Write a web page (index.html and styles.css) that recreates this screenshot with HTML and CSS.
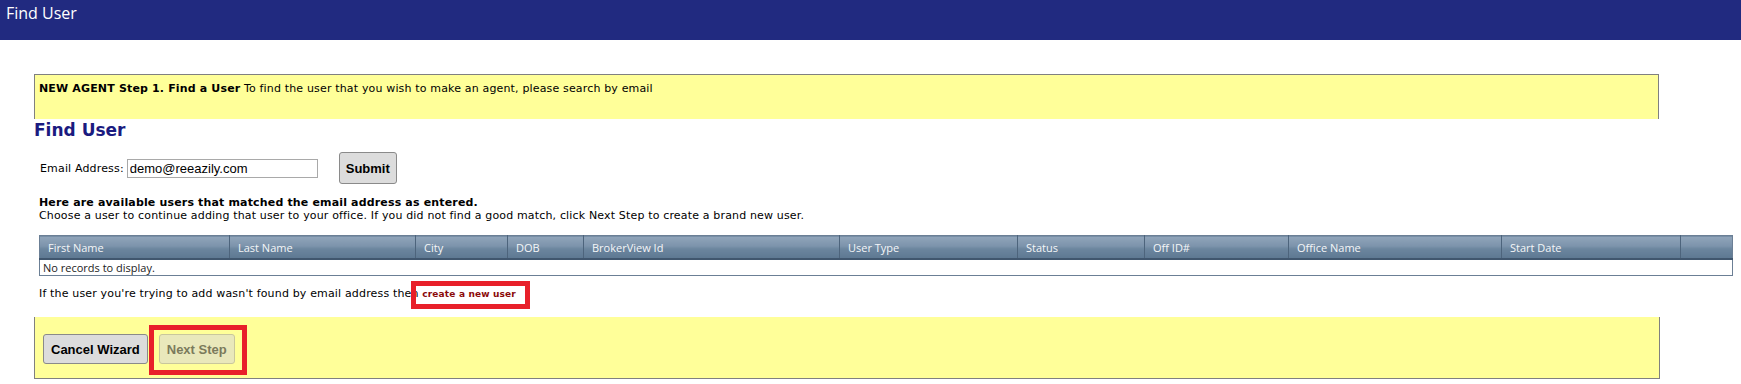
FILE: index.html
```html
<!DOCTYPE html>
<html lang="en">
<head>
    <meta charset="UTF-8">
    <title>Find User</title>
    <link rel="stylesheet" href="styles.css">
</head>
<body>
    <div class="topbar">Find User</div>

    <div class="page">
        <div class="step-note">
            <b>NEW AGENT Step 1. Find a User</b> To find the user that you wish to make an agent, please search by email
        </div>

        <h2 class="section-title">Find User</h2>

        <form class="search-row">
            <label for="email">Email Address:</label>
            <input type="text" id="email" value="demo@reeazily.com">
            <button type="button" class="btn btn-submit">Submit</button>
        </form>

        <div class="match-info">
            <b>Here are available users that matched the email address as entered.</b><br>
            Choose a user to continue adding that user to your office. If you did not find a good match, click Next Step to create a brand new user.
        </div>

        <table class="grid">
            <colgroup>
                <col style="width:190px">
                <col style="width:186px">
                <col style="width:92px">
                <col style="width:76px">
                <col style="width:256px">
                <col style="width:178px">
                <col style="width:127px">
                <col style="width:144px">
                <col style="width:213px">
                <col style="width:179px">
                <col>
            </colgroup>
            <thead>
                <tr>
                    <th>First Name</th>
                    <th>Last Name</th>
                    <th>City</th>
                    <th>DOB</th>
                    <th>BrokerView Id</th>
                    <th>User Type</th>
                    <th>Status</th>
                    <th>Off ID#</th>
                    <th>Office Name</th>
                    <th>Start Date</th>
                    <th></th>
                </tr>
            </thead>
            <tbody>
                <tr>
                    <td colspan="11">No records to display.</td>
                </tr>
            </tbody>
        </table>

        <p class="not-found">
            If the user you're trying to add wasn't found by email address then <a href="#" class="new-user-link">create a new user<span class="mark mark-link"></span></a>
        </p>

        <div class="wizard-bar">
            <button type="button" class="btn btn-wizard">Cancel Wizard</button>
            <span class="marked">
                <button type="button" class="btn btn-wizard" disabled>Next Step</button>
                <span class="mark mark-next"></span>
            </span>
        </div>
    </div>
</body>
</html>
```

FILE: styles.css
```css
body {
    margin: 0;
    font-family: "DejaVu Sans", Verdana, sans-serif;
    font-size: 11px;
    line-height: 13px;
    letter-spacing: 0.16px;
    color: #000;
    background-color: #fff;
}
.topbar {
    height: 40px;
    background-color: #212a80;
    color: #fff;
    font-family: "Open Sans", "Segoe UI", sans-serif;
    font-size: 16px;
    line-height: 26px;
    letter-spacing: 0;
    padding-left: 6px;
}
.page {
    padding: 34px 0 0 34px;
}
.step-note {
    width: 1625px;
    height: 45px;
    box-sizing: border-box;
    background-color: #ffff99;
    border: 1px solid #808080;
    border-bottom: none;
    padding: 7px 0 0 4px;
}
.section-title {
    margin: 0;
    font-size: 17px;
    line-height: 22px;
    font-weight: bold;
    letter-spacing: 0;
    color: #1b1b80;
}
.search-row {
    display: flex;
    align-items: center;
    height: 32px;
    margin: 11px 0 0 6px;
}
.search-row label {
    margin-right: 3px;
}
.search-row input {
    width: 191px;
    height: 19px;
    box-sizing: border-box;
    margin: 0;
    padding: 0 2px;
    border: 1px solid #a9a9a9;
    font-family: "Liberation Sans", Arial, sans-serif;
    font-size: 13px;
    letter-spacing: 0;
    color: #000;
}
.btn {
    font-family: "Liberation Sans", Arial, sans-serif;
    font-size: 13px;
    font-weight: bold;
    letter-spacing: 0;
    color: #000;
    background-color: #dcdcdc;
    border: 1px solid #8a8a8a;
    border-radius: 3px;
    padding: 0;
    cursor: pointer;
}
.btn:disabled {
    background-color: #e9e8bb;
    border-color: #c9c79c;
    color: #7b7a5c;
    cursor: default;
}
.btn-submit {
    width: 58px;
    height: 32px;
    margin-left: 21px;
}
.match-info {
    margin: 12px 0 0 5px;
}
.grid {
    margin: 13px 0 0 5px;
    width: 1694px;
    table-layout: fixed;
    border-collapse: collapse;
    border: 1px solid #6b7f95;
    font-family: "Open Sans", "Segoe UI", sans-serif;
    font-size: 11px;
    letter-spacing: 0;
}
.grid th {
    height: 22px;
    padding: 0 0 0 8px;
    text-align: left;
    font-weight: normal;
    color: #f4f6f8;
    background: linear-gradient(to bottom, #91a5ba 0%, #7c93ab 45%, #6c869f 55%, #5d7892 100%);
    border-left: 1px solid #4d647c;
    border-bottom: 2px solid #40566e;
    white-space: nowrap;
    overflow: hidden;
}
.grid th:first-child {
    border-left: none;
}
.grid td {
    height: 15px;
    padding: 0 0 0 3px;
    line-height: 15px;
    color: #222;
}
.not-found {
    position: relative;
    margin: 11px 0 0 5px;
}
.new-user-link {
    position: relative;
    color: #8b0a0a;
    font-weight: bold;
    font-size: 9px;
    text-decoration: none;
}
.mark {
    position: absolute;
    border: 5px solid #e8202a;
    pointer-events: none;
}
.mark-link {
    left: -11px;
    right: -14px;
    top: -8px;
    bottom: -10px;
}
.wizard-bar {
    display: flex;
    align-items: center;
    gap: 11px;
    width: 1626px;
    box-sizing: border-box;
    margin-top: 16px;
    padding: 17px 0 14px 8px;
    background-color: #ffff99;
    border: 1px solid #808080;
    border-top: none;
}
.btn-wizard {
    height: 30px;
    padding: 0 7px;
}
.marked {
    position: relative;
    display: flex;
}
.mark-next {
    left: -10px;
    right: -12px;
    top: -9px;
    bottom: -11px;
}
```
